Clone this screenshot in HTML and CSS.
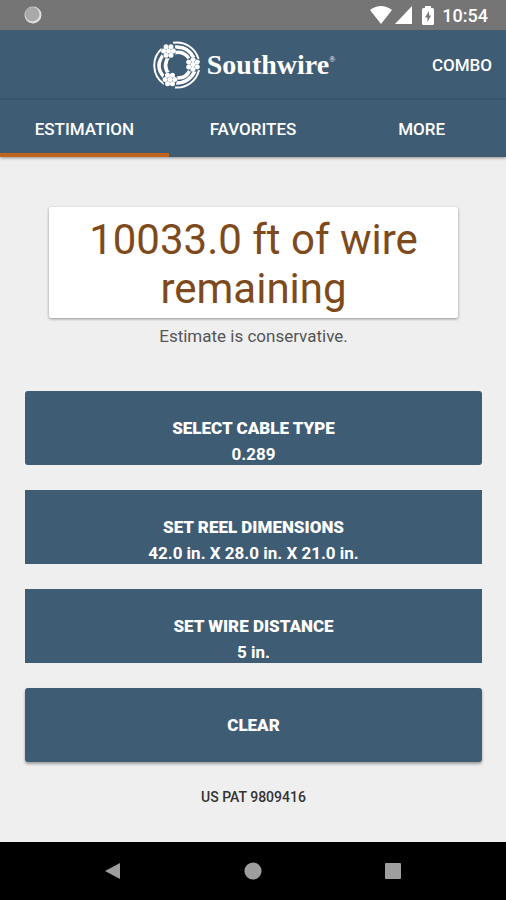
FILE: index.html
```html
<!DOCTYPE html>
<html lang="en">
<head>
    <meta charset="UTF-8">
    <meta name="viewport" content="width=device-width, initial-scale=1.0">
    <title>Southwire</title>
    <link rel="stylesheet" href="styles.css">
</head>
<body>

    <!-- Status bar -->
    <div class="status-bar">
        <svg class="sync-icon" viewBox="0 0 18 18">
            <circle cx="9" cy="9" r="8.5" fill="#e0e0e0"/>
            <circle cx="8.3" cy="8.2" r="7.2" fill="#a9a9a9"/>
        </svg>
        <div class="status-right">
            <svg class="wifi-icon" viewBox="0 0 22 18">
                <path d="M11 18L0 4Q11 -4 22 4Z" fill="#fff"/>
            </svg>
            <svg class="signal-icon" viewBox="0 0 17 18">
                <path d="M17 0V18H0Z" fill="#fff"/>
            </svg>
            <svg class="battery-icon" viewBox="0 0 12 19">
                <path d="M3 0H9V2H10.500Q12 2 12 3.500V17.500Q12 19 10.500 19H1.500Q0 19 0 17.500V3.500Q0 2 1.500 2H3Z" fill="#fff"/>
                <path d="M7 5L3 11.500H5.500V16L9 9.500H7Z" fill="#757575"/>
            </svg>
            <span class="clock">10:54</span>
        </div>
    </div>

    <!-- App bar -->
    <header class="app-bar">
        <div class="logo">
            <svg class="logo-mark" viewBox="0 0 48 48">
                <g fill="none" stroke="#fff">
                    <path d="M20 1.800A22.500 22.500 0 0 1 45.500 18" stroke-width="2"/>
                    <path d="M22 6Q35 5 41 17" stroke-width="3.500"/>
                    <path d="M21 12Q31 9 37 19" stroke-width="3.500"/>
                    <path d="M46 29A22.500 22.500 0 0 1 22 46.500" stroke-width="2"/>
                    <path d="M42 30Q36 42 23 42" stroke-width="3.500"/>
                    <path d="M37 29Q33 38 23 37" stroke-width="3.500"/>
                    <path d="M11 43A22.500 22.500 0 0 1 9 7.500" stroke-width="2"/>
                    <path d="M11 36Q1 25 11 13" stroke-width="3.500"/>
                    <path d="M16 33Q9 25 16 15" stroke-width="3.500"/>
                </g>
                <defs>
                    <g id="strand">
                        <circle r="7.500" fill="#3f5c75"/>
                        <g fill="#fff">
                            <circle r="2.500"/>
                            <circle cx="4.900" r="2.500"/>
                            <circle cx="-4.900" r="2.500"/>
                            <circle cx="2.450" cy="4.300" r="2.500"/>
                            <circle cx="-2.450" cy="4.300" r="2.500"/>
                            <circle cx="2.450" cy="-4.300" r="2.500"/>
                            <circle cx="-2.450" cy="-4.300" r="2.500"/>
                        </g>
                    </g>
                </defs>
                <use href="#strand" transform="translate(15.500 10)"/>
                <use href="#strand" transform="translate(40 23.500) rotate(30)"/>
                <use href="#strand" transform="translate(17 38.500)"/>
            </svg>
            <span class="logo-name">Southwire<sup>®</sup></span>
        </div>
        <button class="combo-btn">COMBO</button>
    </header>

    <nav class="tabs">
        <a href="#" class="tab active">ESTIMATION</a>
        <a href="#" class="tab">FAVORITES</a>
        <a href="#" class="tab">MORE</a>
    </nav>

    <main class="content">
        <div class="result">10033.0 ft of wire remaining</div>
        <p class="note">Estimate is conservative.</p>

        <div class="actions">
            <button class="action rounded"><span class="label">SELECT CABLE TYPE</span><span>0.289</span></button>
            <button class="action"><span class="label">SET REEL DIMENSIONS</span><span>42.0 in. X 28.0 in. X 21.0 in.</span></button>
            <button class="action"><span class="label">SET WIRE DISTANCE</span><span>5 in.</span></button>
            <button class="action clear rounded"><span class="label">CLEAR</span></button>
        </div>

        <p class="patent">US PAT 9809416</p>
    </main>

    <!-- System navigation -->
    <div class="system-nav">
        <button aria-label="Back">
            <svg viewBox="0 0 18 18"><path d="M16 1V17L1 9Z"/></svg>
        </button>
        <button aria-label="Home">
            <svg viewBox="0 0 18 18"><circle cx="9" cy="9" r="8.600"/></svg>
        </button>
        <button aria-label="Recent apps">
            <svg viewBox="0 0 18 18"><rect x="1" y="1" width="16" height="16" rx="1"/></svg>
        </button>
    </div>

</body>
</html>
```
FILE: styles.css
```css
* {
    box-sizing: border-box;
}
body {
    margin: 0;
    min-height: 100vh;
    display: flex;
    flex-direction: column;
    background: #efefef;
    font-family: Roboto, sans-serif;
}
button {
    border: none;
    padding: 0;
    font-family: inherit;
    cursor: pointer;
}
svg {
    display: block;
}
.status-bar {
    display: flex;
    justify-content: space-between;
    align-items: center;
    height: 30px;
    padding: 0 18px 0 24px;
    background: #757575;
}
.sync-icon {
    width: 18px;
    height: 18px;
}
.status-right {
    display: flex;
    align-items: center;
}
.wifi-icon {
    width: 22px;
    height: 18px;
    margin-right: 3px;
}
.signal-icon {
    width: 17px;
    height: 18px;
    margin-right: 10px;
}
.battery-icon {
    width: 12px;
    height: 19px;
    margin-right: 8px;
}
.clock {
    color: white;
    font-size: 18px;
    font-weight: 500;
}
.app-bar {
    display: grid;
    grid-template-columns: 1fr auto 1fr;
    align-items: center;
    height: 69px;
    padding: 0 14px;
    background: #3f5c75;
    color: white;
}
.logo {
    grid-column: 2;
    display: flex;
    align-items: center;
    gap: 6px;
    margin-right: 18px;
}
.logo-mark {
    width: 48px;
    height: 48px;
}
.logo-name {
    font-family: "Liberation Serif", serif;
    font-size: 28px;
    font-weight: bold;
    line-height: 32px;
}
.logo-name sup {
    font-size: 8px;
    font-weight: normal;
    line-height: 1;
    vertical-align: 12px;
}
.combo-btn {
    justify-self: end;
    background: none;
    color: white;
    font-size: 17px;
    font-weight: 500;
}
.tabs {
    display: flex;
    height: 58px;
    background: #3f5c75;
    border-top: 1px solid #385269;
    box-shadow: 0 1px 3px rgba(0, 0, 0, 0.4);
}
.tab {
    flex: 1;
    display: flex;
    align-items: center;
    justify-content: center;
    border-top: 4px solid transparent;
    border-bottom: 4px solid transparent;
    color: white;
    font-size: 17px;
    font-weight: 500;
    text-decoration: none;
}
.tab.active {
    border-bottom-color: #c0641c;
}
.content {
    flex: 1;
    padding: 50px 24px 0 25px;
    text-align: center;
}
.result {
    margin: 0 24px;
    padding: 8px 24px 5px;
    background: white;
    border-radius: 2px;
    box-shadow: 0 1px 3px rgba(0, 0, 0, 0.4);
    color: #7e4a1c;
    font-size: 42px;
    line-height: 49px;
}
.note {
    margin: 8px 0 0;
    color: #555;
    font-size: 17px;
    line-height: 20px;
}
.actions {
    display: flex;
    flex-direction: column;
    gap: 25px;
    margin-top: 45px;
}
.action {
    display: flex;
    flex-direction: column;
    align-items: center;
    height: 74px;
    padding-top: 24px;
    background: #3f5c75;
    color: white;
    font-size: 17px;
    font-weight: bold;
    line-height: 26px;
}
.label {
    font-weight: 900;
}
.rounded {
    border-radius: 3px;
}
.clear {
    box-shadow: 0 2px 3px rgba(0, 0, 0, 0.35);
}
.patent {
    margin: 25px 0 0;
    color: #333;
    font-size: 14px;
    font-weight: 500;
    line-height: 20px;
}
.system-nav {
    display: flex;
    justify-content: center;
    align-items: center;
    gap: 122px;
    height: 58px;
    background: black;
}
.system-nav button {
    background: none;
}
.system-nav svg {
    width: 18px;
    height: 18px;
    fill: #9e9e9e;
}
```
